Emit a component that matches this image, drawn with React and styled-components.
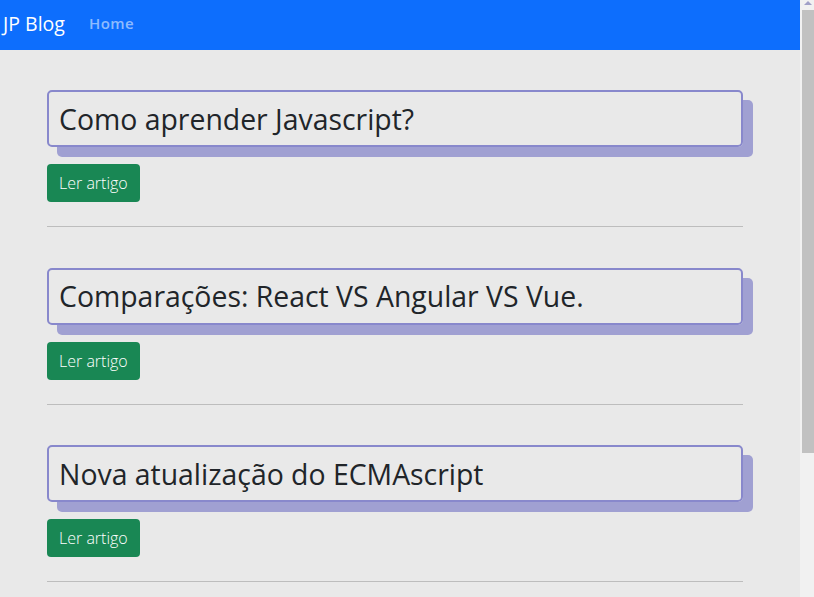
import styled, { createGlobalStyle } from 'styled-components';

const GlobalStyle = createGlobalStyle`
    html, body {
        margin: 0;
        padding: 0;
        background: #e9e9e9;
        font-family: "Open Sans", "Noto Sans", sans-serif;
        overflow: hidden;
    }
`;

const Frame = styled.div`
    display: flex;
    height: 597px;
    overflow: hidden;
`;

const Page = styled.div`
    flex: 1;
    min-width: 0;
`;

const ScrollTrack = styled.div`
    width: 14px;
    background: #f1f1f1;
    display: flex;
    flex-direction: column;
    align-items: flex-end;
`;

const ScrollArrow = styled.div`
    width: 12px;
    height: 10px;
    display: flex;
    justify-content: center;
    padding-top: 1px;
    box-sizing: border-box;
`;

const ScrollThumb = styled.div`
    width: 12px;
    height: 443px;
    background: #c1c1c1;
`;

const Navbar = styled.nav`
    display: flex;
    align-items: center;
    height: 50px;
    background: #0d6efd;
    gap: 24px;
`;

const Brand = styled.a`
    color: #fff;
    font-size: 19.5px;
    padding-left: 3px;
    margin-top: -4px;
`;

const NavLink = styled.a`
    color: rgba(255, 255, 255, 0.55);
    font-size: 15px;
    font-weight: 600;
    letter-spacing: 0.5px;
    margin-top: -5px;
`;

const Container = styled.main`
    width: 696px;
    margin-left: 47px;
    padding-top: 40px;
`;

const Post = styled.article`
    display: flex;
    flex-direction: column;
    align-items: flex-start;
`;

const TitleBox = styled.h2`
    box-sizing: border-box;
    width: 100%;
    height: 57px;
    margin: 0;
    padding: 0 10px;
    display: flex;
    align-items: center;
    border: 2px solid #8888cc;
    border-radius: 5px;
    box-shadow: 10px 10px 0 #a0a0d2;
    font-size: 28.4px;
    font-weight: 400;
    color: #212529;
`;

const ReadButton = styled.button`
    margin-top: 17px;
    height: 38px;
    padding: 0 12px;
    border: none;
    border-radius: 4px;
    background: #198754;
    color: #fff;
    font-family: inherit;
    font-size: 16px;
    font-weight: 300;
`;

const Divider = styled.hr`
    width: 100%;
    margin: 24px 0 40.5px;
    border: none;
    border-top: 1px solid #bdbdbd;
`;

const posts = [
    'Como aprender Javascript?',
    'Comparações: React VS Angular VS Vue.',
    'Nova atualização do ECMAscript',
];

const App = () => {
    return (
        <>
            <GlobalStyle />
            <Frame>
                <Page>
                    <Navbar>
                        <Brand>JP Blog</Brand>
                        <NavLink>Home</NavLink>
                    </Navbar>
                    <Container>
                        {posts.map((title) => (
                            <Post key={title}>
                                <TitleBox>{title}</TitleBox>
                                <ReadButton>Ler artigo</ReadButton>
                                <Divider />
                            </Post>
                        ))}
                    </Container>
                </Page>
                <ScrollTrack>
                    <ScrollArrow>
                        <svg width="10" height="4" viewBox="0 0 10 4">
                            <path d="M5 0 L9 4 L1 4 Z" fill="#a0a0c8" />
                        </svg>
                    </ScrollArrow>
                    <ScrollThumb />
                </ScrollTrack>
            </Frame>
        </>
    );
};

export default App;
